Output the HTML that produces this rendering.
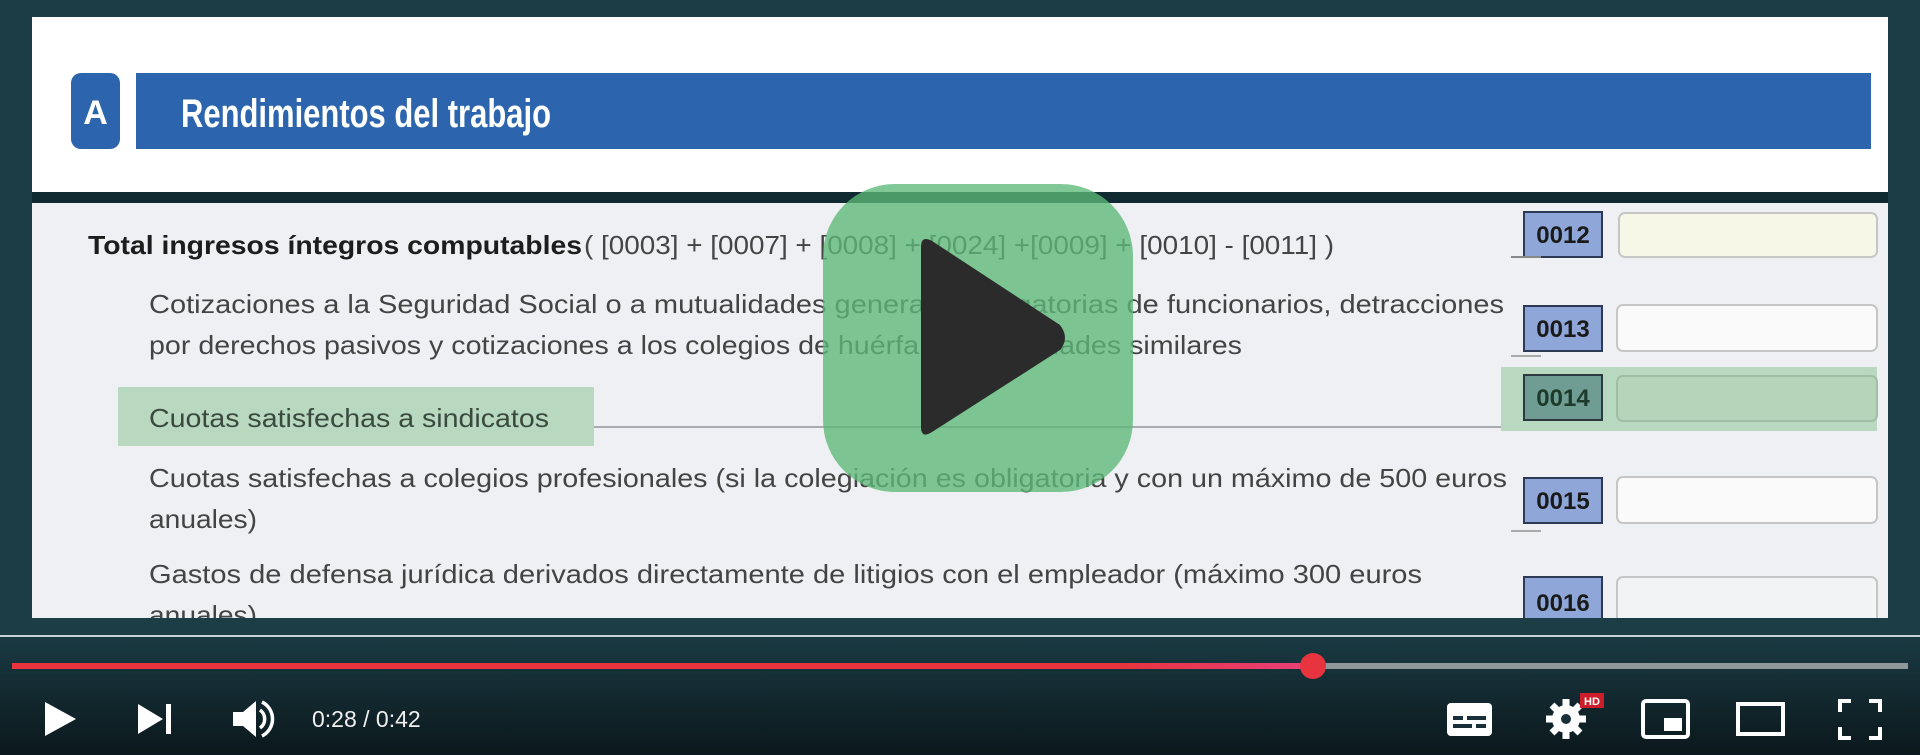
<!DOCTYPE html>
<html><head><meta charset="utf-8"><style>
html,body{margin:0;padding:0;background:#1c3d46;}
svg{display:block}
</style></head><body>
<svg width="1920" height="755" viewBox="0 0 1920 755" xmlns="http://www.w3.org/2000/svg" font-family="Liberation Sans, sans-serif">
<defs>
<linearGradient id="ctrl" x1="0" y1="0" x2="0" y2="1"><stop offset="0" stop-color="#1a3a43"/><stop offset="1" stop-color="#0b181c"/></linearGradient>
<linearGradient id="prog" x1="0" y1="0" x2="1" y2="0"><stop offset="0" stop-color="#e8343f"/><stop offset="0.85" stop-color="#e8343f"/><stop offset="1" stop-color="#e8407a"/></linearGradient>
<clipPath id="pc"><rect x="32" y="203" width="1856" height="415"/></clipPath>
</defs>
<rect width="1920" height="755" fill="#1c3d46"/>
<rect x="32" y="17" width="1856" height="175" fill="#ffffff"/>
<rect x="71" y="73" width="49" height="76" rx="10" fill="#2c65ad"/>
<text x="95.5" y="124" font-size="34" font-weight="bold" fill="#fff" text-anchor="middle" font-family="Liberation Sans Narrow, Liberation Sans, sans-serif">A</text>
<rect x="136" y="73" width="1735" height="76" fill="#2c65ad"/>
<text x="181" y="127" font-size="40" font-weight="bold" fill="#fff" font-family="Liberation Sans Narrow, Liberation Sans, sans-serif" textLength="370" lengthAdjust="spacingAndGlyphs">Rendimientos del trabajo</text>
<rect x="32" y="192" width="1856" height="11" fill="#0f2a31"/>
<rect x="32" y="203" width="1856" height="415" fill="#eef0f4"/>
<g clip-path="url(#pc)">
<g font-size="26" fill="#333">
<text x="88" y="254" font-weight="bold" fill="#1d1d1d" textLength="494" lengthAdjust="spacingAndGlyphs">Total ingresos íntegros computables</text>
<text x="584" y="254" fill="#444" textLength="750" lengthAdjust="spacingAndGlyphs">( [0003] + [0007] + [0008] + [0024] +[0009] + [0010] - [0011] )</text>
<text x="149" y="313" fill="#444" textLength="1355" lengthAdjust="spacingAndGlyphs">Cotizaciones a la Seguridad Social o a mutualidades generales obligatorias de funcionarios, detracciones</text>
<text x="149" y="354" fill="#444" textLength="1093" lengthAdjust="spacingAndGlyphs">por derechos pasivos y cotizaciones a los colegios de huérfanos o entidades similares</text>
<rect x="118" y="387" width="476" height="59" fill="#b8d8bf"/>
<rect x="594" y="426" width="946" height="2" fill="#a9acb0"/>
<text x="149" y="427" fill="#3a4a3e" textLength="400" lengthAdjust="spacingAndGlyphs">Cuotas satisfechas a sindicatos</text>
<text x="149" y="487" fill="#444" textLength="1358" lengthAdjust="spacingAndGlyphs">Cuotas satisfechas a colegios profesionales (si la colegiación es obligatoria y con un máximo de 500 euros</text>
<text x="149" y="528" fill="#444" textLength="108" lengthAdjust="spacingAndGlyphs">anuales)</text>
<text x="149" y="583" fill="#444" textLength="1273" lengthAdjust="spacingAndGlyphs">Gastos de defensa jurídica derivados directamente de litigios con el empleador (máximo 300 euros</text>
<text x="149" y="624" fill="#444" textLength="108" lengthAdjust="spacingAndGlyphs">anuales)</text>
</g>
<rect x="1501" y="367" width="376" height="64" fill="#b8d8bf"/>
<g font-size="24" font-weight="bold" fill="#1a1a1a" text-anchor="middle">
<rect x="1524" y="212" width="78" height="45" fill="#8fa6d8" stroke="#2c3a55" stroke-width="2"/><text x="1563" y="243">0012</text>
<rect x="1524" y="306" width="78" height="45" fill="#8fa6d8" stroke="#2c3a55" stroke-width="2"/><text x="1563" y="337">0013</text>
<rect x="1524" y="375" width="78" height="45" fill="#6f9c93" stroke="#2c3a40" stroke-width="2"/><text x="1563" y="406" fill="#1d3a2b">0014</text>
<rect x="1524" y="478" width="78" height="45" fill="#8fa6d8" stroke="#2c3a55" stroke-width="2"/><text x="1563" y="509">0015</text>
<rect x="1524" y="577" width="78" height="50" fill="#8fa6d8" stroke="#2c3a55" stroke-width="2"/><text x="1563" y="611">0016</text>
</g>
<rect x="1511" y="256" width="30" height="2" fill="#888"/>
<rect x="1511" y="355" width="30" height="2" fill="#aaa"/>
<rect x="1511" y="530" width="30" height="2" fill="#aaa"/>
<rect x="1619" y="213" width="258" height="44" rx="6" fill="#f6f7e6" stroke="#c6c6c6" stroke-width="2"/>
<rect x="1617" y="305" width="260" height="46" rx="6" fill="#fafafa" stroke="#c6c6c6" stroke-width="2"/>
<rect x="1617" y="376" width="260" height="45" rx="6" fill="#b5d5bb" stroke="#9fbfa5" stroke-width="2"/>
<rect x="1617" y="477" width="260" height="46" rx="6" fill="#fafafa" stroke="#c6c6c6" stroke-width="2"/>
<rect x="1617" y="577" width="260" height="60" rx="6" fill="#f2f3f5" stroke="#c6c6c6" stroke-width="2"/>
</g>
<rect x="823" y="184" width="310" height="308" rx="72" fill="#5cb877" fill-opacity="0.78"/>
<path d="M921 247 Q921 235 932 241 L1060 325 Q1070 338 1060 350 L932 432 Q921 439 921 427 Z" fill="#2b2b2b"/>
<rect x="0" y="636" width="1920" height="119" fill="url(#ctrl)"/>
<rect x="0" y="635" width="1920" height="2" fill="#c9d3d6"/>
<rect x="12" y="663" width="1896" height="6" fill="#8e979a"/>
<rect x="12" y="663" width="1301" height="6" fill="url(#prog)"/>
<circle cx="1313" cy="666" r="13" fill="#e8343f"/>
<g fill="#ffffff">
<path d="M45 702 L76 719 L45 736 Z"/>
<path d="M138 704 L163 719 L138 734 Z"/><rect x="166" y="704" width="5" height="30"/>
<path d="M233 712 H243 L256 701 V737 L243 726 H233 Z"/>
<path d="M260 710 A11 11 0 0 1 260 728" fill="none" stroke="#fff" stroke-width="3.5"/>
<path d="M262 702 A19 19 0 0 1 262 736" fill="none" stroke="#fff" stroke-width="3.5"/>
<text x="312" y="727" font-size="23" fill="#f0f0f0">0:28 / 0:42</text>
<rect x="1447" y="703" width="45" height="33" rx="4"/>
<g fill="#1a3038"><rect x="1453" y="716" width="10" height="4"/><rect x="1467" y="716" width="19" height="4"/><rect x="1453" y="724" width="19" height="4"/><rect x="1476" y="724" width="10" height="4"/></g>
<circle cx="1566" cy="719" r="14"/>
<g stroke="#fff" stroke-width="7"><path d="M1566 699 V739 M1546 719 H1586 M1552 705 L1580 733 M1580 705 L1552 733"/></g>
<circle cx="1566" cy="719" r="5" fill="#1a3038"/>
<rect x="1580" y="693" width="24" height="15" fill="#cc1e2a" rx="1"/>
<text x="1592" y="705" font-size="11" font-weight="bold" text-anchor="middle" fill="#fff">HD</text>
<rect x="1643" y="701" width="45" height="36" rx="3" fill="none" stroke="#fff" stroke-width="4"/>
<rect x="1664" y="718" width="18" height="13"/>
<rect x="1738" y="704" width="45" height="30" fill="none" stroke="#fff" stroke-width="4"/>
<path d="M1840 712 V701 H1851 M1869 701 H1880 V712 M1880 727 V738 H1869 M1851 738 H1840 V727" fill="none" stroke="#fff" stroke-width="4"/>
</g>
</svg>
</body></html>
